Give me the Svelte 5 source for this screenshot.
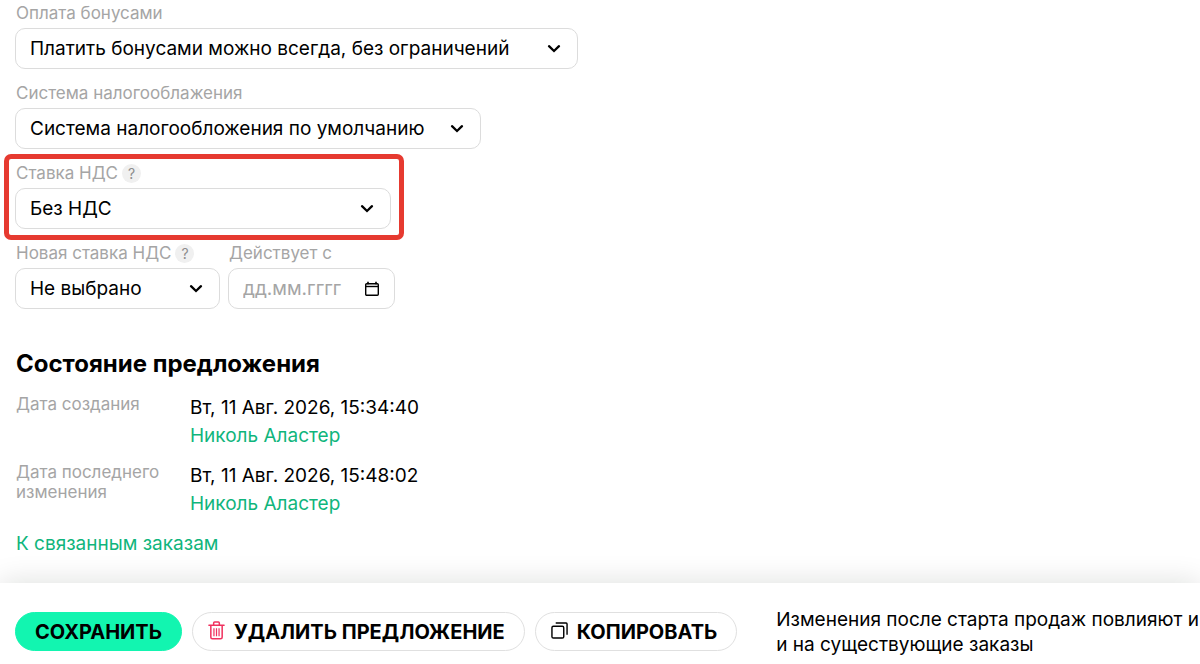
<script>
  let bonus = $state('Платить бонусами можно всегда, без ограничений');
  let tax = $state('Система налогообложения по умолчанию');
  let vat = $state('Без НДС');
  let newVat = $state('Не выбрано');
  let startDate = $state('');

  const history = [
    { label: 'Дата создания', date: 'Вт, 11 Авг. 2026, 15:34:40', author: 'Николь Аластер' },
    { label: 'Дата последнего изменения', date: 'Вт, 11 Авг. 2026, 15:48:02', author: 'Николь Аластер' },
  ];
</script>

{#snippet chevron()}
  <svg class="chevron" viewBox="0 0 14 10" aria-hidden="true">
    <path d="M2 2.2 7 7 12 2.2" fill="none" stroke="currentColor" stroke-width="2.3" stroke-linecap="round" />
  </svg>
{/snippet}

<div class="page">
  <main>
    <form class="fields">
      <div class="field bonus">
        <div class="caption"><label for="bonus">Оплата бонусами</label></div>
        <div class="control">
          <select id="bonus" bind:value={bonus}>
            <option>Платить бонусами можно всегда, без ограничений</option>
          </select>
          {@render chevron()}
        </div>
      </div>

      <div class="field tax">
        <div class="caption"><label for="tax">Система налогооблажения</label></div>
        <div class="control">
          <select id="tax" bind:value={tax}>
            <option>Система налогообложения по умолчанию</option>
          </select>
          {@render chevron()}
        </div>
      </div>

      <div class="field vat highlight">
        <div class="caption">
          <label for="vat">Ставка НДС</label>
          <button type="button" class="help">?</button>
        </div>
        <div class="control">
          <select id="vat" bind:value={vat}>
            <option>Без НДС</option>
          </select>
          {@render chevron()}
        </div>
      </div>

      <div class="row">
        <div class="field new-vat">
          <div class="caption">
            <label for="new-vat">Новая ставка НДС</label>
            <button type="button" class="help">?</button>
          </div>
          <div class="control">
            <select id="new-vat" bind:value={newVat}>
              <option>Не выбрано</option>
            </select>
            {@render chevron()}
          </div>
        </div>
        <div class="field date">
          <div class="caption"><label for="start-date">Действует с</label></div>
          <div class="control">
            <input id="start-date" type="text" placeholder="дд.мм.гггг" bind:value={startDate} />
            <svg class="calendar" viewBox="0 0 16 16" aria-hidden="true">
              <rect x="1.7" y="2.7" width="12.6" height="11.6" rx="1" fill="none" stroke="currentColor" stroke-width="1.4" />
              <path d="M1.5 5.5h13" fill="none" stroke="currentColor" stroke-width="1.4" />
              <path d="M4 .7v2.6M12 .7v2.6" fill="none" stroke="currentColor" stroke-width="1.6" />
            </svg>
          </div>
        </div>
      </div>
    </form>

    <section class="status">
      <h2>Состояние предложения</h2>
      <dl>
        {#each history as entry}
          <div class="entry">
            <dt>{entry.label}</dt>
            <dd>
              <span>{entry.date}</span>
              <a href="#author">{entry.author}</a>
            </dd>
          </div>
        {/each}
      </dl>
      <a href="#orders">К связанным заказам</a>
    </section>
  </main>

  <footer>
    <div class="actions">
      <button type="button" class="save">СОХРАНИТЬ</button>
      <button type="button" class="remove">
        <svg class="trash" viewBox="0 0 18 20" aria-hidden="true">
          <g fill="none" stroke="currentColor" stroke-width="1.6">
            <path d="M1 4.500h16" stroke-linecap="round" />
            <path d="M6 4.300V2q0-1 1-1h4q1 0 1 1v2.300" />
            <path d="M3 4.700v12.500q0 1.600 1.600 1.600h8.800q1.600 0 1.600-1.600v-12.500" />
            <path d="M6.300 7.500v8.500M9 7.500v8.500M11.700 7.500v8.500" stroke-width="1.3" />
          </g>
        </svg>
        УДАЛИТЬ ПРЕДЛОЖЕНИЕ
      </button>
      <button type="button" class="copy">
        <svg class="pages" viewBox="0 0 18 18" aria-hidden="true">
          <g fill="none" stroke="currentColor" stroke-width="1.5">
            <rect x="1" y="4.5" width="12.5" height="12.5" rx="1.500" />
            <path d="M5 1H16q1 0 1 1V13.500" />
          </g>
        </svg>
        КОПИРОВАТЬ
      </button>
    </div>
    <p>Изменения после старта продаж повлияют и<br />и на существующие заказы</p>
  </footer>
</div>

<style>
  :global(body) {
    margin: 0;
    background: #fff;
  }
  .page {
    min-height: 100vh;
    display: flex;
    flex-direction: column;
    overflow: hidden;
    font-family: Inter, 'Open Sans', sans-serif;
    font-size: 19px;
    line-height: 28px;
    color: #000;
  }
  .page * {
    box-sizing: border-box;
  }
  main {
    flex: 1;
    padding: 4px 15px 0;
  }
  .fields {
    display: flex;
    flex-direction: column;
    align-items: flex-start;
    gap: 15px;
  }
  .row {
    display: flex;
    gap: 8px;
  }
  .field {
    max-width: 100%;
  }
  .bonus {
    width: 563px;
  }
  .tax {
    width: 466px;
  }
  .vat {
    width: 376px;
  }
  .new-vat {
    width: 205px;
  }
  .date {
    width: 167px;
  }
  .highlight {
    position: relative;
  }
  .highlight::after {
    content: '';
    position: absolute;
    inset: -10px -13px -11px -11px;
    border: 5px solid #e63a30;
    border-radius: 7px;
    pointer-events: none;
  }
  .caption {
    display: flex;
    align-items: center;
    gap: 4px;
    height: 18px;
    margin-bottom: 6px;
    padding-left: 1px;
    font-size: 17px;
    color: #a5a5a5;
    white-space: nowrap;
  }
  .help {
    width: 19px;
    height: 19px;
    padding: 0;
    border: 0;
    border-radius: 50%;
    background: #f0f0f0;
    font: 400 14px/19px Inter, sans-serif;
    color: #8c8c8c;
  }
  .control {
    display: grid;
    align-items: center;
  }
  .control > * {
    grid-area: 1 / 1;
  }
  select,
  input {
    appearance: none;
    width: 100%;
    height: 41px;
    padding: 0 14px;
    border: 1px solid #dcdcdc;
    border-radius: 10px;
    background: #fff;
    font: inherit;
    color: #000;
  }
  input::placeholder {
    color: #a5a5a5;
    opacity: 1;
  }
  .chevron,
  .calendar {
    justify-self: end;
    pointer-events: none;
  }
  .chevron {
    width: 14px;
    height: 10px;
    margin-right: 17px;
  }
  .calendar {
    width: 16px;
    height: 16px;
    margin-right: 15px;
  }
  .status {
    padding: 40px 1px 23px;
  }
  h2 {
    margin: 0;
    font-size: 24px;
    line-height: 30px;
    font-weight: 700;
  }
  dl {
    margin: 15px 0 12px;
    display: flex;
    flex-direction: column;
    gap: 12px;
  }
  .entry {
    display: grid;
    grid-template-columns: 144px 1fr;
    gap: 30px;
  }
  dt {
    font-size: 17px;
    line-height: 20px;
    color: #a5a5a5;
  }
  dd {
    margin: 0;
    display: flex;
    flex-direction: column;
    align-items: flex-start;
  }
  a {
    color: #0fb57c;
    text-decoration: none;
  }
  footer {
    display: flex;
    align-items: flex-start;
    gap: 39px;
    padding: 24px 0 7px 15px;
    background: #fff;
    box-shadow: 0 0 30px rgba(0, 20, 10, 0.14);
    white-space: nowrap;
  }
  .actions {
    display: flex;
    flex-shrink: 0;
    gap: 10px;
    padding-top: 5px;
  }
  footer button {
    display: flex;
    align-items: center;
    height: 39px;
    padding: 0 19px 0 15px;
    border: 1px solid #e0e0e0;
    border-radius: 20px;
    background: #fff;
    font: 700 20px/24px Inter, sans-serif;
    color: #000;
  }
  footer .save {
    padding: 0 19px;
    border-color: #12f5b0;
    background: #12f5b0;
  }
  .trash {
    width: 17px;
    height: 19px;
    margin-right: 9px;
    margin-bottom: 3px;
    color: #f0325f;
  }
  .pages {
    width: 17px;
    height: 17px;
    margin-right: 9px;
    margin-bottom: 3px;
  }
  footer p {
    margin: 0;
    line-height: 25px;
  }
</style>
